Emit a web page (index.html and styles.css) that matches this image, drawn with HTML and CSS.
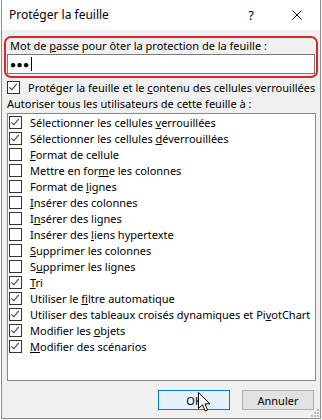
FILE: index.html
```html
<!DOCTYPE html>
<html lang="fr">
<head>
  <meta charset="UTF-8">
  <title>Protéger la feuille</title>
  <link rel="stylesheet" href="styles.css">
</head>
<body>

<div class="window">
  <div class="titlebar">
    <div class="title">Protéger la feuille</div>
    <div class="title-btn help">?</div>
    <div class="title-btn close">
      <svg width="10" height="10" viewBox="0 0 10 10"><path d="M0.5 0.5 L9.5 9.5 M9.5 0.5 L0.5 9.5" stroke="#000" stroke-width="1" fill="none"/></svg>
    </div>
  </div>

  <div class="content">
    <div class="highlight">
      <div class="label">Mot de <u>p</u>asse pour ôter la protection de la feuille :</div>
      <div class="password"><span class="dots">●●●</span><span class="caret"></span></div>
    </div>

    <div class="check-row">
      <span class="box checked"></span>
      <span>Protéger la feuille et le <u>c</u>ontenu des cellules verrouillées</span>
    </div>

    <div class="caption">Autoriser tous les utilisateurs de cette feuille à :</div>

    <div class="listbox">
      <div class="item"><span class="box checked"></span><span>Sélectionner les cellules <u>v</u>errouillées</span></div>
      <div class="item"><span class="box checked"></span><span>Sélectionner les cellules <u>d</u>éverrouillées</span></div>
      <div class="item"><span class="box"></span><span><u>F</u>ormat de cellule</span></div>
      <div class="item"><span class="box"></span><span>Mettre en for<u>m</u>e les colonnes</span></div>
      <div class="item"><span class="box"></span><span>Format de <u>l</u>ignes</span></div>
      <div class="item"><span class="box"></span><span><u>I</u>nsérer des colonnes</span></div>
      <div class="item"><span class="box"></span><span>I<u>n</u>sérer des lignes</span></div>
      <div class="item"><span class="box"></span><span>Insérer des <u>l</u>iens hypertexte</span></div>
      <div class="item"><span class="box"></span><span><u>S</u>upprimer les colonnes</span></div>
      <div class="item"><span class="box"></span><span>S<u>u</u>pprimer les lignes</span></div>
      <div class="item"><span class="box checked"></span><span><u>T</u>ri</span></div>
      <div class="item"><span class="box checked"></span><span>Utiliser le <u>f</u>iltre automatique</span></div>
      <div class="item"><span class="box checked"></span><span>Utiliser des tableaux croisés dynamiques et Pi<u>v</u>otChart</span></div>
      <div class="item"><span class="box checked"></span><span>Modifier les <u>o</u>bjets</span></div>
      <div class="item"><span class="box checked"></span><span><u>M</u>odifier des scénarios</span></div>
    </div>

    <div class="buttons">
      <button class="btn default">OK</button>
      <button class="btn">Annuler</button>
    </div>
  </div>

  <!-- mouse pointer over OK -->
  <svg class="cursor" width="13" height="20" viewBox="0 0 13 20">
    <path d="M0.5 0.5 L0.5 16.5 L4.5 12.8 L7.2 19 L9.6 18 L7 11.9 L12 11.9 Z" fill="#fff" stroke="#000" stroke-width="1" stroke-linejoin="miter"/>
  </svg>

  <svg class="grip" width="8" height="8" viewBox="0 0 8 8">
    <rect x="6" y="0" width="2" height="2" fill="#bdbdbd"/>
    <rect x="3" y="3" width="2" height="2" fill="#bdbdbd"/>
    <rect x="6" y="3" width="2" height="2" fill="#bdbdbd"/>
    <rect x="0" y="6" width="2" height="2" fill="#bdbdbd"/>
    <rect x="3" y="6" width="2" height="2" fill="#bdbdbd"/>
    <rect x="6" y="6" width="2" height="2" fill="#bdbdbd"/>
  </svg>
</div>

</body>
</html>
```

FILE: styles.css
```css
body {
  margin: 0;
  background: #ffffff;
  font-family: 'Noto Sans', sans-serif;
  font-size: 11px;
  color: #000;
}

u {
  text-underline-offset: 1px;
}

.window {
  position: relative;
  margin-left: 1px;
  width: 318px;
  height: 418px;
  border: 1px solid #8a8a8a;
  border-top: none;
  background: #f0f0f0;
  display: flex;
  flex-direction: column;
}

.titlebar {
  height: 30px;
  background: #ffffff;
  display: flex;
  align-items: center;
}

.title {
  flex: 1;
  padding-left: 7px;
  padding-bottom: 1px;
  font-size: 12px;
}

.title-btn {
  height: 30px;
  display: flex;
  align-items: center;
  justify-content: center;
}

.help {
  width: 46px;
  font-size: 13px;
  padding-bottom: 1px;
}

.close {
  width: 46px;
}

.content {
  flex: 1;
  display: flex;
  flex-direction: column;
}

.highlight {
  margin: 6px 2px 0 2px;
  border: 2px solid #e0242c;
  border-radius: 7px;
  padding: 0 1px 2px 1px;
}

.label {
  height: 16px;
  line-height: 16px;
  padding-left: 3px;
}

.password {
  height: 18px;
  border: 1px solid #7a7a7a;
  background: #fff;
  display: flex;
  align-items: center;
  padding-left: 2px;
}

.dots {
  font-size: 10px;
  letter-spacing: 0.5px;
}

.caret {
  width: 1px;
  height: 14px;
  background: #000;
  margin-left: 1px;
}

.check-row {
  height: 17px;
  display: flex;
  align-items: center;
  gap: 8px;
  padding-left: 5px;
  margin-top: 1px;
  white-space: nowrap;
}

.caption {
  height: 16px;
  line-height: 16px;
  padding-left: 5px;
}

.listbox {
  margin: 1px 4px 0 5px;
  height: 266px;
  border: 1px solid #828790;
  background: #fff;
}

.item {
  height: 16px;
  display: flex;
  align-items: center;
  gap: 8px;
  padding-left: 1px;
  white-space: nowrap;
}

.box {
  width: 11px;
  height: 11px;
  border: 1px solid #333333;
  background: #fff;
  flex-shrink: 0;
  position: relative;
}

.box.checked::after {
  content: "";
  position: absolute;
  left: 3px;
  top: 0;
  width: 3px;
  height: 7px;
  border-right: 1px solid #333;
  border-bottom: 1px solid #333;
  transform: rotate(40deg);
}

.buttons {
  display: flex;
  justify-content: flex-end;
  gap: 12px;
  padding: 9px 6px 0 0;
}

.btn {
  width: 72px;
  height: 20px;
  font-family: 'Noto Sans', sans-serif;
  font-size: 11px;
  background: #e1e1e1;
  border: 1px solid #adadad;
  padding: 0;
  color: #000;
}

.btn.default {
  background: #e5f1fb;
  border-color: #0078d7;
}

.cursor {
  position: absolute;
  left: 196px;
  top: 392px;
}

.grip {
  position: absolute;
  right: 1px;
  bottom: 1px;
}
```
